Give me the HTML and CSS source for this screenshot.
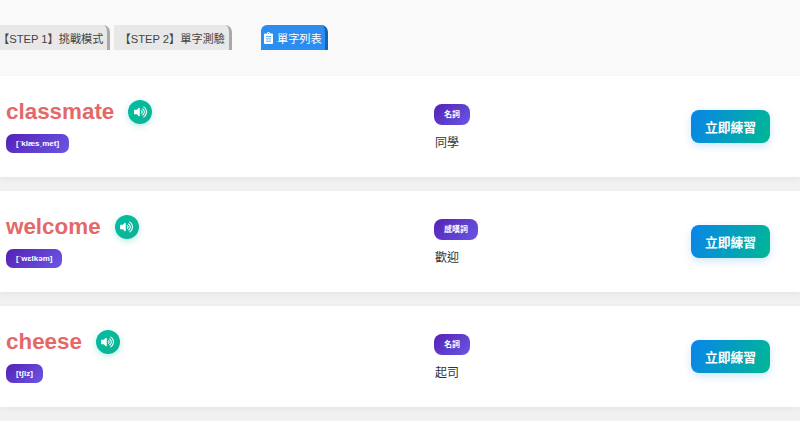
FILE: index.html
```html
<!DOCTYPE html>
<html lang="zh-Hant">
<head>
    <meta charset="UTF-8">
    <meta name="viewport" content="width=device-width, initial-scale=1.0">
    <title>單字列表</title>
    <link rel="stylesheet" href="styles.css">
</head>
<body>
    <svg class="icon-defs">
        <symbol id="icon-volume" viewBox="0 0 576 512"><path fill="currentColor" d="M215.030 71.050L126.060 160H24c-13.260 0-24 10.740-24 24v144c0 13.250 10.740 24 24 24h102.060l88.970 88.950c15.030 15.030 40.970 4.470 40.970-16.970V88.020c0-21.460-25.960-31.980-40.970-16.970zm233.320-51.080c-11.170-7.330-26.180-4.240-33.510 6.950-7.340 11.170-4.220 26.180 6.950 33.510 66.270 43.490 105.820 116.600 105.820 195.580 0 78.980-39.550 152.090-105.820 195.580-11.170 7.320-14.290 22.340-6.950 33.500 7.040 10.710 21.930 14.560 33.510 6.950C528.270 439.580 576 351.330 576 256S528.270 72.430 448.350 19.970zM480 256c0-63.530-32.060-121.940-85.770-156.240-11.190-7.140-26.030-3.820-33.120 7.460s-3.780 26.210 7.410 33.360C408.270 165.970 432 209.110 432 256s-23.730 90.030-63.480 115.420c-11.190 7.140-14.500 22.070-7.410 33.360 6.510 10.360 21.120 15.140 33.120 7.460C447.940 377.940 480 319.540 480 256zm-141.770-76.870c-11.580-6.330-26.190-2.160-32.610 9.450-6.390 11.610-2.160 26.200 9.450 32.610C327.980 228.280 336 241.630 336 256c0 14.380-8.020 27.720-20.920 34.810-11.610 6.410-15.840 21-9.450 32.610 6.430 11.660 21.050 15.800 32.610 9.450 28.230-15.550 45.770-45 45.770-76.880s-17.540-61.320-45.780-76.860z"/></symbol>
    </svg>

    <nav class="tabs">
        <a class="tab">【STEP 1】挑戰模式</a>
        <a class="tab">【STEP 2】單字測驗</a>
        <a class="tab tab-active">
            <svg class="tab-icon" viewBox="0 0 384 512"><path fill="currentColor" d="M336 64h-80c0-35.300-28.700-64-64-64s-64 28.700-64 64H48C21.500 64 0 85.500 0 112v352c0 26.500 21.500 48 48 48h288c26.500 0 48-21.500 48-48V112c0-26.500-21.500-48-48-48zM192 40c13.300 0 24 10.700 24 24s-10.700 24-24 24-24-10.700-24-24 10.700-24 24-24zm112 360H80v-32h224v32zm0-96H80v-32h224v32zm0-96H80v-32h224v32z"/></svg>
            單字列表
        </a>
    </nav>

    <div class="word-list">
        <div class="word-card">
            <div class="word-main">
                <div class="word-line">
                    <span class="word">classmate</span>
                    <button class="sound-btn"><svg><use href="#icon-volume"/></svg></button>
                </div>
                <span class="pill">[ˈklæsˌmet]</span>
            </div>
            <div class="word-info">
                <span class="pill pill-pos">名詞</span>
                <div class="meaning">同學</div>
            </div>
            <button class="practice-btn">立即練習</button>
        </div>

        <div class="word-card">
            <div class="word-main">
                <div class="word-line">
                    <span class="word">welcome</span>
                    <button class="sound-btn"><svg><use href="#icon-volume"/></svg></button>
                </div>
                <span class="pill">[ˈwɛlkəm]</span>
            </div>
            <div class="word-info">
                <span class="pill pill-pos">感嘆詞</span>
                <div class="meaning">歡迎</div>
            </div>
            <button class="practice-btn">立即練習</button>
        </div>

        <div class="word-card">
            <div class="word-main">
                <div class="word-line">
                    <span class="word">cheese</span>
                    <button class="sound-btn"><svg><use href="#icon-volume"/></svg></button>
                </div>
                <span class="pill">[tʃiz]</span>
            </div>
            <div class="word-info">
                <span class="pill pill-pos">名詞</span>
                <div class="meaning">起司</div>
            </div>
            <button class="practice-btn">立即練習</button>
        </div>

        <div class="word-card word-card-next"></div>
    </div>
</body>
</html>
```

FILE: styles.css
```css
html, body {
    height: 100%;
    overflow: hidden;
}
body {
    margin: 0;
    font-family: "Liberation Sans", "Noto Sans CJK TC", sans-serif;
    background-color: #f9f9f9;
    color: #333333;
}
.icon-defs {
    display: none;
}
.tabs {
    display: flex;
    height: 25px;
    padding-top: 25px;
    margin-left: -7px;
    margin-bottom: 26px;
}
.tab {
    display: flex;
    align-items: center;
    gap: 4px;
    padding: 0 4px 0 5px;
    margin-right: 4px;
    font-size: 11.2px;
    color: #444444;
    background-color: #e8e8e8;
    border-right: 3px solid #a9a9a9;
    border-radius: 0 7px 0 0;
}
.tab-active {
    margin-left: 25px;
    padding: 0 3px;
    color: #ffffff;
    background-color: #2b8def;
    border-right-color: #1264b5;
    border-radius: 6px 7px 0 0;
}
.tab-icon {
    width: 9px;
    height: 12px;
}
.word-list {
    display: flex;
    flex-direction: column;
    gap: 14px;
    background-color: #f1f1f1;
}
.word-card {
    display: flex;
    align-items: flex-start;
    box-sizing: border-box;
    height: 101px;
    padding: 24px 30px 0 6px;
    background-color: #ffffff;
    box-shadow: 0 2px 6px rgba(0, 0, 0, 0.05);
}
.word-card-next {
    height: 15px;
    padding: 0;
    box-shadow: none;
}
.word-main {
    width: 428px;
    flex-shrink: 0;
}
.word-line {
    display: flex;
    align-items: center;
    gap: 14px;
    height: 24px;
    margin-bottom: 8px;
}
.word {
    font-size: 22.4px;
    font-weight: 700;
    color: #e56868;
}
.sound-btn {
    display: flex;
    align-items: center;
    justify-content: center;
    width: 24px;
    height: 24px;
    padding: 0;
    border: none;
    border-radius: 50%;
    color: #ffffff;
    background: linear-gradient(135deg, #00bfa5, #10b08f);
    box-shadow: 0 2px 6px rgba(0, 191, 165, 0.3);
}
.sound-btn svg {
    width: 13px;
    height: 12px;
}
.pill {
    display: inline-block;
    box-sizing: border-box;
    height: 19px;
    line-height: 19px;
    padding: 0 10px;
    font-size: 8px;
    font-weight: 700;
    color: #ffffff;
    background: linear-gradient(135deg, #5521b5, #6a57e3);
    border-radius: 7px;
}
.word-info {
    flex: 1;
    padding-top: 4px;
}
.pill-pos {
    display: block;
    width: fit-content;
    height: 21px;
    line-height: 21px;
    border-radius: 8px;
}
.meaning {
    margin-top: 9px;
    padding-left: 1px;
    font-size: 12px;
    line-height: 18px;
}
.practice-btn {
    width: 79px;
    height: 33px;
    margin-top: 10px;
    padding: 0;
    border: none;
    border-radius: 8px;
    font-family: inherit;
    font-size: 12.8px;
    font-weight: 700;
    color: #ffffff;
    background: linear-gradient(110deg, #0a84ea, #00b894);
    box-shadow: 0 3px 8px rgba(10, 132, 234, 0.2);
}
```
